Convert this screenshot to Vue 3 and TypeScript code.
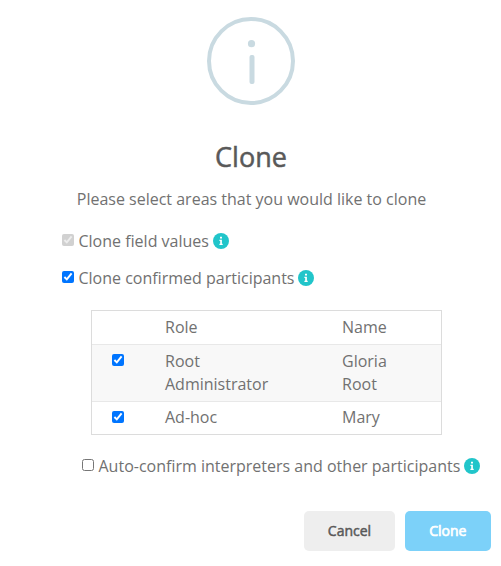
<script setup lang="ts">
import { ref } from 'vue'

interface Participant {
  role: string
  name: string
  selected: boolean
}

const cloneFields = ref(true)
const cloneParticipants = ref(true)
const autoConfirm = ref(false)
const participants = ref<Participant[]>([
  { role: 'Root Administrator', name: 'Gloria Root', selected: true },
  { role: 'Ad-hoc', name: 'Mary', selected: true },
])
</script>

<template>
  <main class="dialog">
    <svg class="hero" viewBox="0 0 88 88" aria-hidden="true">
      <circle cx="44" cy="44" r="42" fill="none" stroke="#c9dae1" stroke-width="4" />
      <circle cx="44.5" cy="26.7" r="3.6" fill="#c9dae1" />
      <rect x="42.5" y="38" width="5" height="29" rx="2" fill="#c9dae1" />
    </svg>
    <h2 class="title">Clone</h2>
    <p class="intro">Please select areas that you would like to clone</p>

    <label class="option">
      <input v-model="cloneFields" type="checkbox" disabled />
      <span>Clone field values</span>
      <svg class="info" viewBox="0 0 16 16"><circle cx="8" cy="8" r="8" /><path d="M7 3.8h2v1.8H7zM6.4 6.7h2.5v4.1h.8V12H6.4v-1.2h.8V7.9h-.8z" /></svg>
    </label>
    <label class="option second">
      <input v-model="cloneParticipants" type="checkbox" />
      <span>Clone confirmed participants</span>
      <svg class="info" viewBox="0 0 16 16"><circle cx="8" cy="8" r="8" /><path d="M7 3.8h2v1.8H7zM6.4 6.7h2.5v4.1h.8V12H6.4v-1.2h.8V7.9h-.8z" /></svg>
    </label>

    <div class="table">
      <div class="row head"><span></span><span>Role</span><span>Name</span></div>
      <div v-for="person in participants" :key="person.role" class="row">
        <input v-model="person.selected" type="checkbox" />
        <span class="role">{{ person.role }}</span>
        <span class="name">{{ person.name }}</span>
      </div>
    </div>

    <label class="option auto">
      <input v-model="autoConfirm" type="checkbox" />
      <span>Auto-confirm interpreters and other participants</span>
      <svg class="info" viewBox="0 0 16 16"><circle cx="8" cy="8" r="8" /><path d="M7 3.8h2v1.8H7zM6.4 6.7h2.5v4.1h.8V12H6.4v-1.2h.8V7.9h-.8z" /></svg>
    </label>

    <footer class="actions">
      <button type="button" class="cancel">Cancel</button>
      <button type="button" class="confirm">Clone</button>
    </footer>
  </main>
</template>

<style>
body { margin: 0; background: #fff; }
</style>

<style scoped>
.dialog {
  box-sizing: border-box;
  width: 501px;
  height: 566px;
  padding-top: 17px;
  overflow: hidden;
  background: #fff;
  color: #717171;
  font-family: "Open Sans", sans-serif;
  font-size: 16px;
  line-height: 23px;
}
.hero { display: block; width: 88px; height: 88px; margin-left: 207px; }
.title {
  margin: 32px 0 0 1px;
  height: 40px;
  color: #595959;
  font-size: 27px;
  font-weight: 400;
  line-height: 40px;
  text-align: center;
  -webkit-text-stroke: 0.5px #595959;
}
.intro { margin: 11px 0 0 2px; text-align: center; white-space: nowrap; }
.option {
  display: flex;
  align-items: center;
  height: 24px;
  margin: 18px 0 0 62px;
  white-space: nowrap;
}
.option.second { margin-top: 13px; }
.option.auto { margin: 19px 0 0 82px; }
input { width: 12px; height: 12px; margin: 0; accent-color: #0075ff; }
.option input { margin: 0 4.5px 2px 0; }
.info { width: 16px; height: 16px; margin-left: 4px; flex: none; }
.info circle { fill: #21c5ca; }
.info path { fill: #fff; }
.table {
  box-sizing: border-box;
  width: 351px;
  margin: 20px 0 0 91px;
  border: 1px solid #dcdcdc;
}
.row {
  display: grid;
  box-sizing: border-box;
  grid-template-columns: 73px 177px 1fr;
  padding: 5px 0;
}
.row + .row { border-top: 1px solid #e8e8e8; }
.row:nth-child(2) { background: #f8f8f8; }
.row:last-child { padding-top: 4px; }
.row input { margin: 4px 0 0 20px; }
.row:last-child input { margin-top: 5px; }
.role { width: 110px; }
.name { width: 60px; }
.actions { display: flex; gap: 10px; margin: 33px 0 0 304px; }
button {
  height: 40px;
  padding: 0;
  border: 0;
  border-radius: 5px;
  font: 400 14px/20px "Open Sans", sans-serif;
  -webkit-text-stroke: 0.5px currentColor;
}
.cancel { width: 91px; background: #eee; color: #595959; }
.confirm { width: 85.5px; background: #7cd1f9; color: #fff; -webkit-text-stroke-width: 0.7px; }
</style>
